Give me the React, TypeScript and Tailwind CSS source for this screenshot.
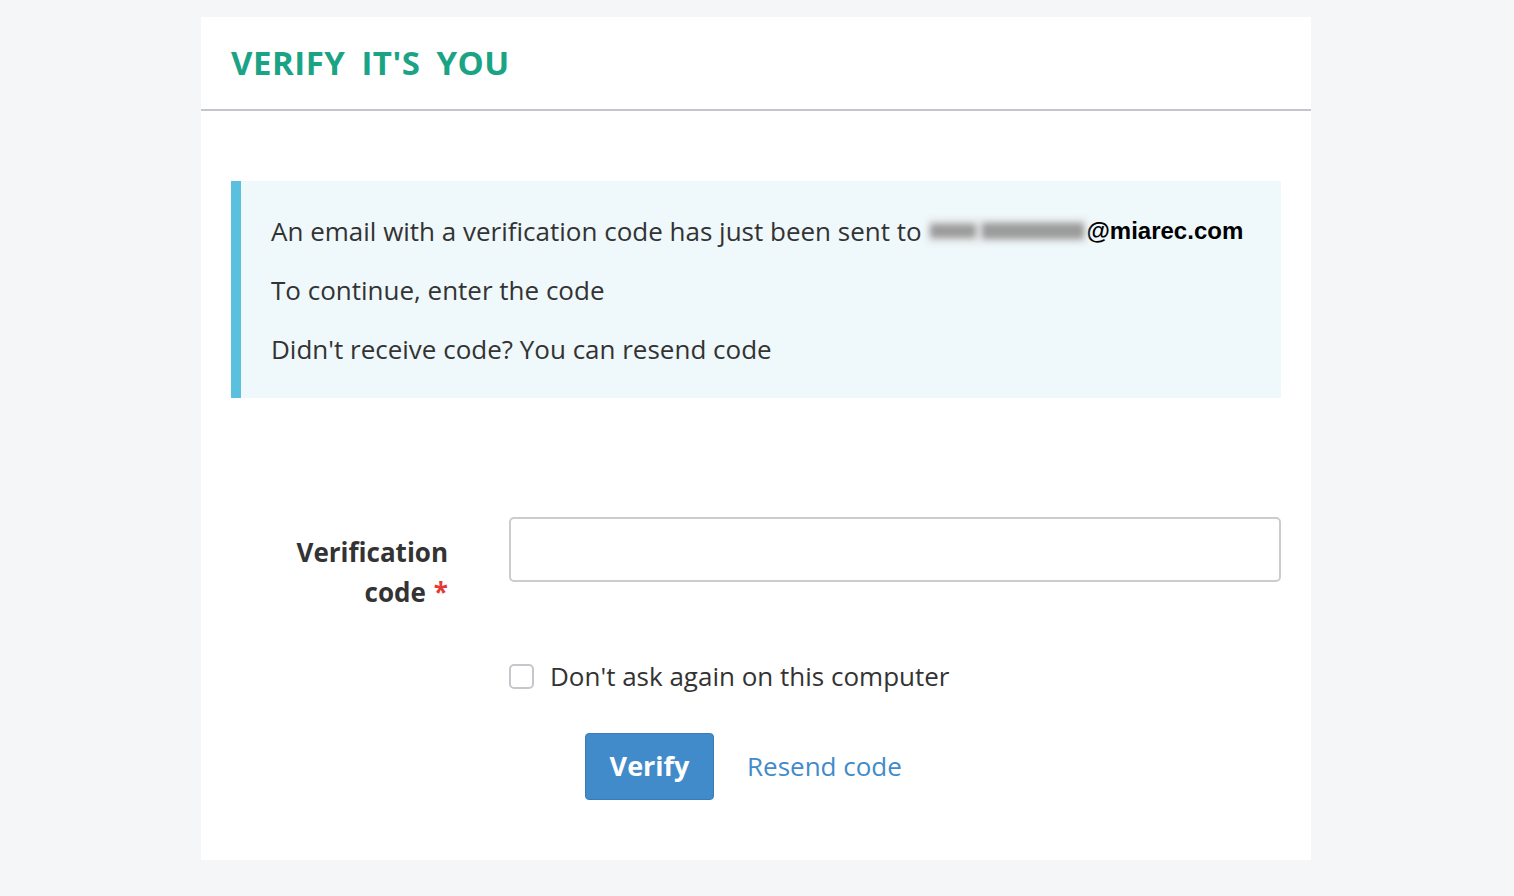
import React from "react";

export default function App() {
  return (
    <div className="min-h-[896px] w-full bg-[#f5f6f8] pt-[17px]" style={{ fontFamily: '"Open Sans", sans-serif' }}>
      <div className="ml-[201px] w-[1110px] bg-white">
        <div className="flex h-[94px] items-center border-b-2 border-[#c3c7cb] px-[30px]">
          <h1 className="text-[33px] font-bold tracking-[0.5px] text-[#1ba386] [word-spacing:7px]">VERIFY IT'S YOU</h1>
        </div>
        <div className="bg-white px-[30px] pb-[60px] pt-[70px]">
          <div className="flex flex-col gap-[29px] border-l-[10px] border-[#5bc0de] bg-[#eff8fb] pb-[34px] pl-[30px] pr-[30px] pt-[35px] text-[26px] leading-[30px] text-[#333333]">
            <p className="flex items-center">
              <span>An email with a verification code has just been sent to&nbsp;</span>
              <span className="flex h-[24px] w-[158px] items-center gap-[6px] bg-[#e4e6e8] px-[2px] blur-[3px]">
                <span className="h-[14px] w-[46px] rounded-[3px] bg-[#9c9c9c]"></span>
                <span className="h-[16px] flex-1 rounded-[3px] bg-[#9c9c9c]"></span>
              </span>
              <span className="text-[24px] font-bold text-black" style={{ fontFamily: '"Liberation Sans", Arial, sans-serif' }}>@miarec.com</span>
            </p>
            <p>To continue, enter the code</p>
            <p>Didn't receive code? You can resend code</p>
          </div>

          <div className="mt-[119px] flex">
            <label className="w-[217px] pl-[50px] pt-[15px] text-right text-[26px] font-bold leading-[40px] text-[#333333]">
              Verification code<span className="ml-[8px] inline-block leading-none text-[#e53935]">*</span>
            </label>
            <div className="ml-[61px] flex-1">
              <input className="h-[65px] w-full rounded-[5px] border-2 border-[#cccccc] bg-white px-3 text-[25px] outline-none" />
            </div>
          </div>

          <div className="ml-[278px] mt-[49px] flex items-center gap-[16px]">
            <span className="inline-block h-[25px] w-[25px] rounded-[5px] border-2 border-[#c4c8cc] bg-white"></span>
            <span className="text-[26px] leading-[30px] text-[#333333]">Don't ask again on this computer</span>
          </div>

          <div className="ml-[354px] mt-[42px] flex items-center gap-[33px]">
            <button className="h-[67px] w-[129px] rounded-[4px] border border-[#3a7cb8] bg-[#428bca] text-[27px] font-bold text-white">Verify</button>
            <a className="text-[26px] text-[#428bca]">Resend code</a>
          </div>
        </div>
      </div>
    </div>
  );
}
